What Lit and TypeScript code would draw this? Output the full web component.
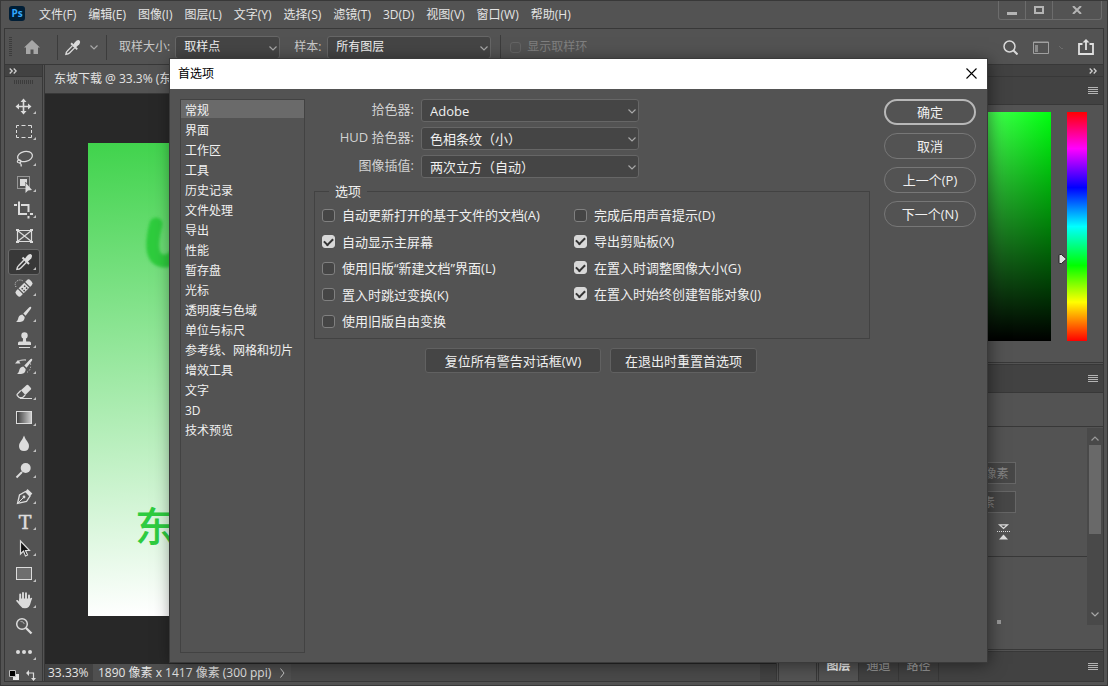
import { LitElement, html, css, svg, type TemplateResult } from "lit";
import { customElement, property, state } from "lit/decorators.js";
import { classMap } from "lit/directives/class-map.js";

const menus = ["文件(F)", "编辑(E)", "图像(I)", "图层(L)", "文字(Y)", "选择(S)", "滤镜(T)", "3D(D)", "视图(V)", "窗口(W)", "帮助(H)"];

const categories = [
  "常规", "界面", "工作区", "工具", "历史记录", "文件处理", "导出", "性能", "暂存盘", "光标",
  "透明度与色域", "单位与标尺", "参考线、网格和切片", "增效工具", "文字", "3D", "技术预览",
];

const dropper = svg`
  <path d="M14.500 8.500l6.500 6.500" stroke="#dcdcdc" stroke-width="2" fill="none"/>
  <path d="M16 11l2.500-3.500q2.500-3 4.500-2.300 2 1.400 .2 4.300l-4.200 4z" fill="#dcdcdc"/>
  <path d="M15.800 11.300l-5.300 5.400q-1.400 1-1.600 3.700 2.600-.2 3.900-1.500l5.400-5.500" fill="none" stroke="#dcdcdc" stroke-width="1.400"/>`;

const brush = svg`
  <path d="M22.800 5.800q1 .6.100 2l-5.300 7-2.300-2.200 6-6.300q.8-.9 1.500-.5z" fill="#dcdcdc"/>
  <path d="M14.300 13.600l2.400 2.300q0 4-3.600 4.900-2.400.6-5-.1 1.700-.8 2-3 .7-3.700 4.200-4.100z" fill="#dcdcdc"/>`;

interface Tool { name: string; icon: TemplateResult<2>; plain?: boolean }

const tools: Tool[] = [
  { name: "移动", icon: svg`<path d="M15.500 7v13M9 13.500h13" stroke="#dcdcdc" stroke-width="1.600"/><path d="M15.500 5.500l3 3.500h-6zM15.500 21.500l3-3.500h-6zM7.500 13.500l3.500-3v6zM23.500 13.500l-3.500-3v6z" fill="#dcdcdc"/>` },
  { name: "矩形选框", icon: svg`<path d="M8.500 9V6.500H11M13.500 6.500h4M20 6.500h3.500V9M23.500 11v3M23.500 16v2.500H20M17.500 18.500h-4M11 18.500H8.500V16M8.500 14v-3" fill="none" stroke="#dcdcdc"/>` },
  { name: "套索", icon: svg`<ellipse cx="17" cy="11.500" rx="7.500" ry="5" transform="rotate(-12 17 11.500)" fill="none" stroke="#dcdcdc" stroke-width="1.300"/><path d="M10.500 15q-2 1.500-.5 2.500 3 1 3-1.500-1.500-2-3.500-.500M11.500 18q2.500 1 1.500 3.500" fill="none" stroke="#dcdcdc" stroke-width="1.200"/>` },
  { name: "对象选择", icon: svg`<rect x="9.500" y="5.500" width="12" height="12" fill="none" stroke="#dcdcdc" stroke-dasharray="1 1"/><path d="M12 8h7v4l-2-1v4h-5z" fill="#dcdcdc"/><path d="M17.500 11.500v10.500l2.500-2.500 4-.5z" fill="#dcdcdc"/>` },
  { name: "裁剪", icon: svg`<path d="M6 8h3M13 8h7.500V15M20.500 19v2.500M11 4.500V17h8M22 17h3" fill="none" stroke="#dcdcdc" stroke-width="2"/>` },
  { name: "图框", plain: true, icon: svg`<path d="M9.500 7.500h14v11h-14zM9.500 7.500l14 11M23.500 7.500l-14 11" fill="none" stroke="#dcdcdc" stroke-width="1.200"/><path d="M8 6h3v2H8zM22 6h3v2h-3zM8 18h3v2H8zM22 18h3v2h-3z" fill="#dcdcdc"/>` },
  { name: "吸管", icon: dropper },
  { name: "污点修复画笔", icon: svg`<g transform="rotate(-45 16 13)"><rect x="6" y="9.500" width="20" height="7" rx="2.500" fill="#dcdcdc"/><path d="M11.500 9v8M20.500 9v8" stroke="#535353" stroke-width="1.200"/><path d="M13.500 11.500h1.500v1.500h-1.500zM17 11.500h1.500v1.500H17zM13.500 14.200h1.500v1.500h-1.500zM17 14.200h1.500v1.500H17z" fill="#444"/></g><path d="M8 12q-2-4 1-6t6 0" fill="none" stroke="#dcdcdc" stroke-dasharray="1 1.300"/>` },
  { name: "画笔", icon: brush },
  { name: "仿制图章", icon: svg`<circle cx="16.500" cy="8.500" r="3.200" fill="#dcdcdc"/><path d="M15.200 10h2.600l.4 4.500h3.300q1.500 0 1.500 1.500v2H10V16q0-1.500 1.500-1.500h3.300z" fill="#dcdcdc"/><path d="M11 20.500h11" stroke="#dcdcdc"/>` },
  { name: "历史记录画笔", icon: svg`<g transform="translate(1 0)">${brush}</g><path d="M9 9.500q3-3 9-2.500" fill="none" stroke="#bdbdbd" stroke-width="1.300"/><path d="M7 10.500l3-3.500 2.500 3.500z" fill="#dcdcdc"/><path d="M22.500 10.500q1 7-4 9" fill="none" stroke="#dcdcdc" stroke-dasharray="1 2"/>` },
  { name: "橡皮擦", icon: svg`<path d="M18.700 6q.8-.6 1.500.1l2.700 3q.6.8 0 1.500l-5.500 5.500-4.500-4.800z" fill="#dcdcdc"/><path d="M12.800 11.500l-3.500 3.600q-.6.700 0 1.400l2 2.200h3.200l2.700-2.700" fill="none" stroke="#dcdcdc" stroke-width="1.300"/><path d="M12 19.500h12" stroke="#dcdcdc"/>` },
  { name: "渐变", icon: svg`<defs><linearGradient id="ramp"><stop stop-color="#3a3a3a"/><stop offset="1" stop-color="#d0d0d0"/></linearGradient></defs><rect x="8.500" y="6.500" width="15" height="12" fill="url(#ramp)" stroke="#dcdcdc"/>` },
  { name: "模糊", icon: svg`<path d="M16 4.500q1 3 3.300 6 1.700 2.300 1.700 4.500 0 5-5 5t-5-5q0-2.200 1.700-4.500 2.300-3 3.300-6z" fill="#dcdcdc"/>` },
  { name: "减淡", icon: svg`<circle cx="17.700" cy="11" r="5" fill="#dcdcdc"/><path d="M14 15l-5.500 5.500" stroke="#dcdcdc" stroke-width="2"/>` },
  { name: "钢笔", icon: svg`<path d="M9.500 20.500l2-8.500 6-3.500 4.500 4.500-3.500 5.500z" fill="none" stroke="#dcdcdc" stroke-width="1.300"/><path d="M9.500 20.500l6-6" stroke="#dcdcdc"/><circle cx="16" cy="14" r="1.400" fill="#dcdcdc"/><path d="M17.500 8.500l2-2.500 4.800 4.500-2.500 3z" fill="#dcdcdc"/>` },
  { name: "横排文字", icon: svg`<text x="17" y="20" text-anchor="middle" font-family="DejaVu Serif, serif" font-size="19" fill="#dcdcdc" stroke="#dcdcdc" stroke-width=".5">T</text>` },
  { name: "路径选择", icon: svg`<path d="M12.500 6v13l3-3 2 5 2-1-2-4.500h4z" fill="#111" stroke="#dcdcdc" stroke-width="1.200"/>` },
  { name: "矩形", icon: svg`<rect x="8.500" y="6.500" width="15" height="12" fill="#6e6e6e" stroke="#dcdcdc"/>` },
  { name: "抓手", icon: svg`<path d="M12.200 14V7.500M15 13V6M18 13V6.200M21 14V8.500" stroke="#dcdcdc" stroke-width="1.900" stroke-linecap="round"/><path d="M11.200 11.500h10.800l1-.5q1-.5 1.200.3-1.200 3-1.700 5-1 5-5.500 5-3.300 0-5-2.800L8.200 14q-.2-1.500 1.300-1 1 .5 1.700 1.800z" fill="#dcdcdc"/>` },
  { name: "缩放", plain: true, icon: svg`<circle cx="14" cy="11" r="5.300" fill="none" stroke="#dcdcdc" stroke-width="1.500"/><path d="M12.500 8.500q3-.5 3.800 2.500" fill="none" stroke="#aaa"/><path d="M18 15l5.500 5.500" stroke="#dcdcdc" stroke-width="2.300"/>` },
  { name: "编辑工具栏", icon: svg`<circle cx="10" cy="13" r="2" fill="#dcdcdc"/><circle cx="16" cy="13" r="2" fill="#dcdcdc"/><circle cx="22" cy="13" r="2" fill="#dcdcdc"/>` },
];

const arrows = html`<svg width="8" height="6" viewBox="0 0 8 6"><path d="M.7 .5L3.200 3 .7 5.500M4.700 .5L7.200 3 4.700 5.500" fill="none" stroke="#d0d0d0" stroke-width="1.300"/></svg>`;
const lines = html`<svg width="10" height="7" viewBox="0 0 10 7"><path d="M0 .5h10M0 2.500h10M0 4.500h10M0 6.500h10" stroke="#b4b4b4"/></svg>`;
const chevron = html`<svg class="chevron" width="8" height="5" viewBox="0 0 8 5"><path d="M.5 .5L4 4 7.500 .5" fill="none" stroke="#a8a8a8" stroke-width="1.200"/></svg>`;

const base = css`
  * { box-sizing: border-box; }
  button, input, select { font: inherit; color: inherit; margin: 0; padding: 0; }
  button { background: none; border: 0; }
  svg { display: block; flex: none; }
`;

@customElement("ps-select")
class PsSelect extends LitElement {
  @property() name = "";
  @property() value = "";
  static styles = [base, css`
    :host { display: block; position: relative; }
    select {
      appearance: none; display: block; width: 100%; height: 23px; padding: 0 24px 0 8px;
      background: #454545; border: 1px solid #666; border-radius: 3px; color: #f0f0f0; outline: none;
    }
    .chevron { position: absolute; right: 3px; top: 10px; pointer-events: none; }
  `];
  render() {
    return html`<select aria-label=${this.name}><option>${this.value}</option></select>${chevron}`;
  }
}

@customElement("ps-check")
class PsCheck extends LitElement {
  @property() label = "";
  @property({ type: Boolean }) checked = false;
  @property({ type: Boolean }) disabled = false;
  static styles = [base, css`
    :host { display: block; }
    label { display: flex; align-items: center; gap: 7px; line-height: 20px; white-space: nowrap; }
    input {
      appearance: none; flex: none; width: 13px; height: 13px; background: #454545;
      border: 1px solid #808080; border-radius: 3px; display: grid; place-items: center;
    }
    input:checked { background: #d8d8d8; border-color: #d8d8d8; }
    input:checked::before {
      content: ""; width: 7px; height: 4px; border: solid #333; border-width: 0 0 2px 2px;
      transform: translateY(-1px) rotate(-45deg);
    }
    input:disabled { width: 11px; height: 11px; background: none; border-color: #646464; }
    .off { color: #808080; gap: 6px; }
  `];
  render() {
    return html`<label class=${classMap({ off: this.disabled })}>
      <input type="checkbox" .checked=${this.checked} ?disabled=${this.disabled}
        @change=${(e: Event) => { this.checked = (e.target as HTMLInputElement).checked; }}>
      <span>${this.label}</span></label>`;
  }
}

@customElement("ps-preferences")
class PsPreferences extends LitElement {
  @state() private current = 0;
  static styles = [base, css`
    :host {
      display: flex; flex-direction: column; background: #535353; color: #f0f0f0;
      font-size: 13px; line-height: 20px; box-shadow: 0 0 0 1px #3a3a3a, 2px 2px 16px rgba(0, 0, 0, .5);
    }
    header {
      display: flex; align-items: center; justify-content: space-between; flex: none; height: 30px;
      padding: 0 10px 1px 8px; background: #fff; color: #000; font-size: 12px;
    }
    h1 { margin: 0; font-size: 12px; font-weight: 400; }
    .content { flex: 1; min-height: 0; display: flex; gap: 9px; padding: 10px 11px 9px 10px; }
    nav {
      width: 125px; flex: none; border: 1px solid #424242; display: flex; flex-direction: column;
      font-size: 12px; overflow: hidden;
    }
    nav button { flex: none; height: 20px; line-height: 18px; padding: 2px 4px 0; text-align: left; white-space: nowrap; }
    nav .on { background: linear-gradient(#6a6a6a 18px, transparent 18px); }
    .page { flex: 1; min-width: 0; }
    .row { display: grid; grid-template-columns: 100px 218px; gap: 7px; height: 23px; margin-bottom: 5px; }
    .row span { text-align: right; color: #d2d2d2; white-space: nowrap; }
    fieldset {
      margin: 0; padding: 6px 7px 7px; border: 1px solid #424242; width: 556px;
      display: grid; grid-template-columns: 252px auto;
    }
    legend { margin-left: 7px; padding: 0 6px; line-height: 16px; }
    .checks { height: 126px; display: flex; flex-direction: column; justify-content: space-between; }
    .checks.four { height: 99px; }
    .resets { display: grid; grid-template-columns: 176px 147px; gap: 9px; margin: 9px 0 0 111px; }
    .resets button { height: 25px; background: #454545; border: 1px solid #616161; border-radius: 3px; white-space: nowrap; }
    .actions { width: 92px; flex: none; display: flex; flex-direction: column; gap: 8px; }
    .actions button { height: 26px; border: 1px solid #777; border-radius: 13px; }
    .actions .primary { border: 2px solid #b8b8b8; }
  `];
  render() {
    return html`
      <header><h1>首选项</h1>
        <button aria-label="关闭"><svg width="11" height="11" viewBox="0 0 11 11"><path d="M.5 .5l10 10M10.500 .5l-10 10" stroke="#000" stroke-width="1.100"/></svg></button>
      </header>
      <div class="content">
        <nav>${categories.map((c, i) => html`<button class=${classMap({ on: i === this.current })} @click=${() => { this.current = i; }}>${c}</button>`)}</nav>
        <div class="page">
          <div class="row"><span>拾色器:</span><ps-select name="拾色器" value="Adobe"></ps-select></div>
          <div class="row"><span>HUD 拾色器:</span><ps-select name="HUD 拾色器" value="色相条纹（小）"></ps-select></div>
          <div class="row"><span>图像插值:</span><ps-select name="图像插值" value="两次立方（自动）"></ps-select></div>
          <fieldset><legend>选项</legend>
            <div class="checks">
              <ps-check label="自动更新打开的基于文件的文档(A)"></ps-check>
              <ps-check label="自动显示主屏幕" checked></ps-check>
              <ps-check label="使用旧版“新建文档”界面(L)"></ps-check>
              <ps-check label="置入时跳过变换(K)"></ps-check>
              <ps-check label="使用旧版自由变换"></ps-check>
            </div>
            <div class="checks four">
              <ps-check label="完成后用声音提示(D)"></ps-check>
              <ps-check label="导出剪贴板(X)" checked></ps-check>
              <ps-check label="在置入时调整图像大小(G)" checked></ps-check>
              <ps-check label="在置入时始终创建智能对象(J)" checked></ps-check>
            </div>
          </fieldset>
          <div class="resets"><button>复位所有警告对话框(W)</button><button>在退出时重置首选项</button></div>
        </div>
        <div class="actions">
          <button class="primary">确定</button><button>取消</button><button>上一个(P)</button><button>下一个(N)</button>
        </div>
      </div>`;
  }
}

@customElement("app-root")
class AppRoot extends LitElement {
  @state() private tool = 6;
  static styles = [base, css`
    :host {
      display: flex; flex-direction: column; position: relative; height: 100vh; overflow: hidden; box-sizing: border-box;
      background: #535353; border: 1px solid #383838; color: #e4e4e4;
      font: 12px/18px "Open Sans", "Noto Sans CJK SC", sans-serif;
    }
    .menubar { display: flex; align-items: flex-start; flex: none; height: 27px; padding: 0 5px 0 8px; }
    .logo {
      margin: 5px 14px 0 0; width: 16px; height: 15px; border-radius: 3px; background: #001e36;
      color: #31a8ff; font-size: 10px; line-height: 14px; font-weight: 700; text-align: center;
    }
    .menus { display: flex; gap: 12px; padding-top: 5px; flex: 1; }
    .menus button { white-space: nowrap; }
    .window { display: flex; height: 19px; border: 1px solid #6c6c6c; border-top: 0; border-radius: 0 0 3px 3px; }
    .window button { width: 27px; display: grid; place-items: center; border-right: 1px solid #6c6c6c; }
    .window button:last-child { width: 48px; border: 0; }
    .frame {
      flex: 1; min-height: 0; margin: 0 3px 3px; display: flex; flex-direction: column;
      border: 1px solid #383838;
    }
    .options { display: flex; align-items: center; flex: none; height: 36px; padding: 1px 9px 0 4px; border-bottom: 1px solid #383838; color: #c8c8c8; white-space: nowrap; }
    .grip { width: 3px; height: 20px; margin-right: 12px; background: repeating-linear-gradient(#3c3c3c 0 1px, transparent 1px 2px); }
    .rule { width: 1px; height: 25px; background: #3c3c3c; }
    .home { margin: 0 17px 0 0; }
    .drop { display: flex; align-items: center; gap: 9px; padding: 0 8px 0 7px; }
    .size { margin: 0 5px 0 12px; }
    .sample { margin: 0 6px 0 14px; }
    .point { width: 105px; }
    .layers { width: 164px; margin-right: 9px; }
    .ring { margin-left: 9px; }
    .spring { flex: 1; }
    .global { display: flex; align-items: center; gap: 15px; }
    .body { flex: 1; min-height: 0; display: flex; gap: 1px; }
    .toolbar { width: 38px; flex: none; border-right: 1px solid #383838; display: flex; flex-direction: column; align-items: center; }
    .strip { flex: none; align-self: stretch; height: 12px; background: #424242; border-bottom: 1px solid #383838; padding: 3px 6px 3px 4px; }
    .dots { flex: none; width: 20px; height: 4px; margin: 3px 0 9px; background: repeating-linear-gradient(90deg, #3c3c3c 0 1px, transparent 1px 2px); }
    .tool { width: 32px; height: 26px; flex: none; border-radius: 3px; }
    .tool.on { background: #383838; box-shadow: inset 0 0 0 1px #6a6a6a; }
    .swatches { margin-top: 5px; }
    .document { flex: 1; min-width: 0; display: flex; flex-direction: column; border: solid #383838; border-width: 0 1px; background: #424242; }
    .tabs { flex: none; height: 29px; border-bottom: 1px solid #383838; display: flex; }
    .tabs button { padding: 0 10px 0 9px; background: #535353; white-space: nowrap; }
    .canvas { flex: 1; min-height: 0; background: #282828; padding: 49px 0 0 43px; }
    .art { display: block; width: 630px; height: 473px; max-width: 100%; background: linear-gradient(176deg, #40d34c, #fff 92%); }
    .art text { font-family: "Noto Sans CJK SC", sans-serif; font-weight: 500; }
    .status { flex: none; height: 17px; display: flex; line-height: 17px; background: #4a4a4a; margin-right: 16px; }
    .status span { padding-left: 3px; width: 48px; background: #424242; }
    .status button { display: flex; align-items: center; gap: 9px; padding: 0 6px 0 5px; background: #4f4f4f; line-height: 17px; }
    .dock { width: 39px; flex: none; border: solid #383838; border-width: 0 1px; }
    .panels { width: 285px; flex: none; display: flex; flex-direction: column; border-left: 1px solid #383838; }
    .panels .strip { display: flex; justify-content: flex-end; }
    .head { flex: none; height: 28px; background: #424242; border-bottom: 1px solid #383838; display: flex; align-items: center; justify-content: flex-end; padding-right: 5px; }
    .color { flex: none; height: 258px; padding: 7px 16px 20px 8px; display: flex; gap: 16px; border-bottom: 1px solid #383838; position: relative; }
    .field { flex: 1; height: 229px; background: linear-gradient(transparent, #000), linear-gradient(90deg, #fff, #00ff10); }
    .hue { width: 20px; height: 229px; background: linear-gradient(#f00, #f0f 16%, #00f 33%, #0ff 50%, #0f0 67%, #ff0 83%, #f00); }
    .marker { position: absolute; right: 36px; top: 149px; }
    .second { margin-top: 1px; border-top: 1px solid #383838; height: 29px; }
    .info { flex: none; height: 34px; border-bottom: 1px solid #383838; }
    .props { flex: 1; min-height: 0; display: flex; border-bottom: 1px solid #383838; }
    .values { flex: 1; display: flex; flex-direction: column; }
    .size-box { height: 130px; padding: 35px 0 0 129px; border-bottom: 1px solid #383838; display: flex; flex-direction: column; gap: 7px; }
    .size-box input { flex: none; width: 68px; height: 22px; padding: 0 5px; background: #474747; border: 1px solid #666; color: #858585; border-radius: 0; }
    .flip { margin: 4px 0 0 49px; }
    .square { width: 4px; height: 4px; margin: 63px 0 0 178px; background: #999; }
    .scroll { width: 16px; height: 197px; margin-top: 1px; padding: 8px 2px; background: #494949; display: flex; flex-direction: column; align-items: center; }
    .thumb { width: 12px; height: 89px; margin: 4px 0 0; background: #696969; }
    .foot { flex: none; height: 30px; margin-top: 1px; border-top: 1px solid #383838; background: #424242; display: flex; align-items: center; padding-right: 5px; }
    .foot button { align-self: stretch; width: 40px; padding-bottom: 2px; border-right: 1px solid #383838; color: #a0a0a0; }
    .foot .on { background: #535353; color: #f0f0f0; font-weight: 700; }
    ps-preferences { position: absolute; inset: 58px 120px 23px 169px; }
  `];
  render() {
    return html`
      <div class="menubar">
        <div class="logo">Ps</div>
        <div class="menus">${menus.map((m) => html`<button>${m}</button>`)}</div>
        <div class="window">
          <button aria-label="最小化"><svg width="10" height="10" viewBox="0 0 10 10"><path d="M0 7h10v3H0z" fill="#b4b4b4"/></svg></button>
          <button aria-label="最大化"><svg width="10" height="8" viewBox="0 0 10 8"><path d="M1 1h8v6H1z" fill="none" stroke="#b4b4b4" stroke-width="2"/></svg></button>
          <button aria-label="关闭"><svg width="10" height="8" viewBox="0 0 10 8"><path d="M1 0l8 8M9 0L1 8" stroke="#b4b4b4" stroke-width="2"/></svg></button>
        </div>
      </div>
      <div class="frame">
        <div class="options">
          <div class="grip"></div>
          <button class="home" aria-label="主页"><svg width="16" height="14" viewBox="0 0 16 14"><path d="M8 0l8 7.500h-2V14H9.500V9.500h-3V14H2V7.500H0z" fill="#a6a6a6"/></svg></button>
          <div class="rule"></div>
          <button class="drop" aria-label="吸管工具"><svg width="16" height="17" viewBox="8 4 17 18">${dropper}</svg>${chevron}</button>
          <div class="rule"></div>
          <span class="size">取样大小:</span><ps-select class="point" name="取样大小" value="取样点"></ps-select>
          <span class="sample">样本:</span><ps-select class="layers" name="样本" value="所有图层"></ps-select>
          <div class="rule"></div>
          <ps-check class="ring" label="显示取样环" disabled></ps-check>
          <div class="spring"></div>
          <div class="global">
            <button aria-label="搜索"><svg width="15" height="15" viewBox="0 0 15 15"><circle cx="6.500" cy="6.500" r="5.500" fill="none" stroke="#d8d8d8" stroke-width="1.500"/><path d="M10.500 10.500l4 4" stroke="#d8d8d8" stroke-width="2"/></svg></button>
            <button aria-label="工作区"><svg width="30" height="13" viewBox="0 0 30 13"><path d="M.5 1h15v11.500H.5zM.5 1.500h15" fill="none" stroke="#a0a0a0"/><path d="M2 4h3v7H2z" fill="#8a8a8a"/><path d="M26 5l3 3 3-3" fill="none" stroke="#6c6c6c"/></svg></button>
            <button aria-label="共享"><svg width="16" height="16" viewBox="0 0 16 16"><path d="M4.500 5H1v10h14V5h-3.500M8 11V2" fill="none" stroke="#e0e0e0" stroke-width="1.800"/><path d="M8 0l3.500 3.500h-7z" fill="#e0e0e0"/></svg></button>
          </div>
        </div>
        <div class="body">
          <div class="toolbar">
            <div class="strip">${arrows}</div>
            <div class="dots"></div>
            ${tools.map((t, i) => html`<button class=${classMap({ tool: true, on: i === this.tool })} aria-label=${t.name} @click=${() => { this.tool = i; }}>
              <svg width="32" height="26" viewBox="0 0 32 26">${t.icon}${t.plain ? "" : svg`<path d="M28 18v3h-3z" fill="#c0c0c0"/>`}</svg></button>`)}
            <svg class="swatches" width="30" height="14" viewBox="0 0 30 14"><path d="M4 4h6v6H4z" fill="#e8e8e8"/><path d="M.5 .5h6v6h-6z" fill="#000" stroke="#bbb"/><path d="M19 3h5.500v6" fill="none" stroke="#dcdcdc" stroke-width="1.200"/><path d="M17 3l3-3v6zM24.500 11l-2.500-3h5z" fill="#dcdcdc"/></svg>
          </div>
          <div class="document">
            <div class="tabs"><button>东坡下载 @ 33.3% (东</button></div>
            <div class="canvas">
              <svg class="art" viewBox="0 0 630 473" preserveAspectRatio="xMinYMin slice">
                <defs><filter id="soft" x="-50%" y="-50%" width="200%" height="200%"><feGaussianBlur stdDeviation="1.800"/></filter></defs>
                <path d="M68 81C63 100 62 119 78 118Q92 116 99 80" fill="none" stroke="#2dcc3c" stroke-width="13" stroke-linecap="round" filter="url(#soft)"/>
                <text x="47" y="398" font-size="40" fill="#2ecc40">东</text>
              </svg>
            </div>
            <div class="status"><span>33.33%</span><button>1890 像素 x 1417 像素 (300 ppi)<svg width="5" height="10" viewBox="0 0 5 10"><path d="M.5 .5L4 5 .5 9.500" fill="none" stroke="#c8c8c8"/></svg></button></div>
          </div>
          <div class="dock"></div>
          <div class="panels">
            <div class="strip">${arrows}</div>
            <div class="head">${lines}</div>
            <div class="color">
              <div class="field"></div><div class="hue"></div>
              <svg class="marker" width="9" height="10" viewBox="0 0 9 10"><path d="M1 1.500q0-1 1-1h1.500L8.500 5 3.500 9.500H2q-1 0-1-1z" fill="#e4e4e4" stroke="#222"/></svg>
            </div>
            <div class="head second">${lines}</div>
            <div class="info"></div>
            <div class="props">
              <div class="values">
                <div class="size-box">
                  <input aria-label="宽度" value="1890 像素" disabled><input aria-label="高度" value="72 像素" disabled>
                  <svg class="flip" width="13" height="16" viewBox="0 0 13 16"><path d="M2.500 .8h8l-4 3.700z" fill="none" stroke="#e0e0e0" stroke-width="1.200"/><path d="M0 7.500h13" stroke="#e0e0e0" stroke-dasharray="1 1"/><path d="M2 15.500l4.500-5 4.500 5z" fill="#e0e0e0"/></svg>
                </div>
                <div class="square"></div>
              </div>
              <div class="scroll">
                <svg width="8" height="5" viewBox="0 0 8 5"><path d="M.5 4.500L4 1l3.500 3.500" fill="none" stroke="#999" stroke-width="1.200"/></svg>
                <div class="thumb"></div><div class="spring"></div>${chevron}
              </div>
            </div>
            <div class="foot"><button class="on">图层</button><button>通道</button><button>路径</button><div class="spring"></div>${lines}</div>
          </div>
        </div>
      </div>
      <ps-preferences role="dialog" aria-label="首选项"></ps-preferences>`;
  }
}
